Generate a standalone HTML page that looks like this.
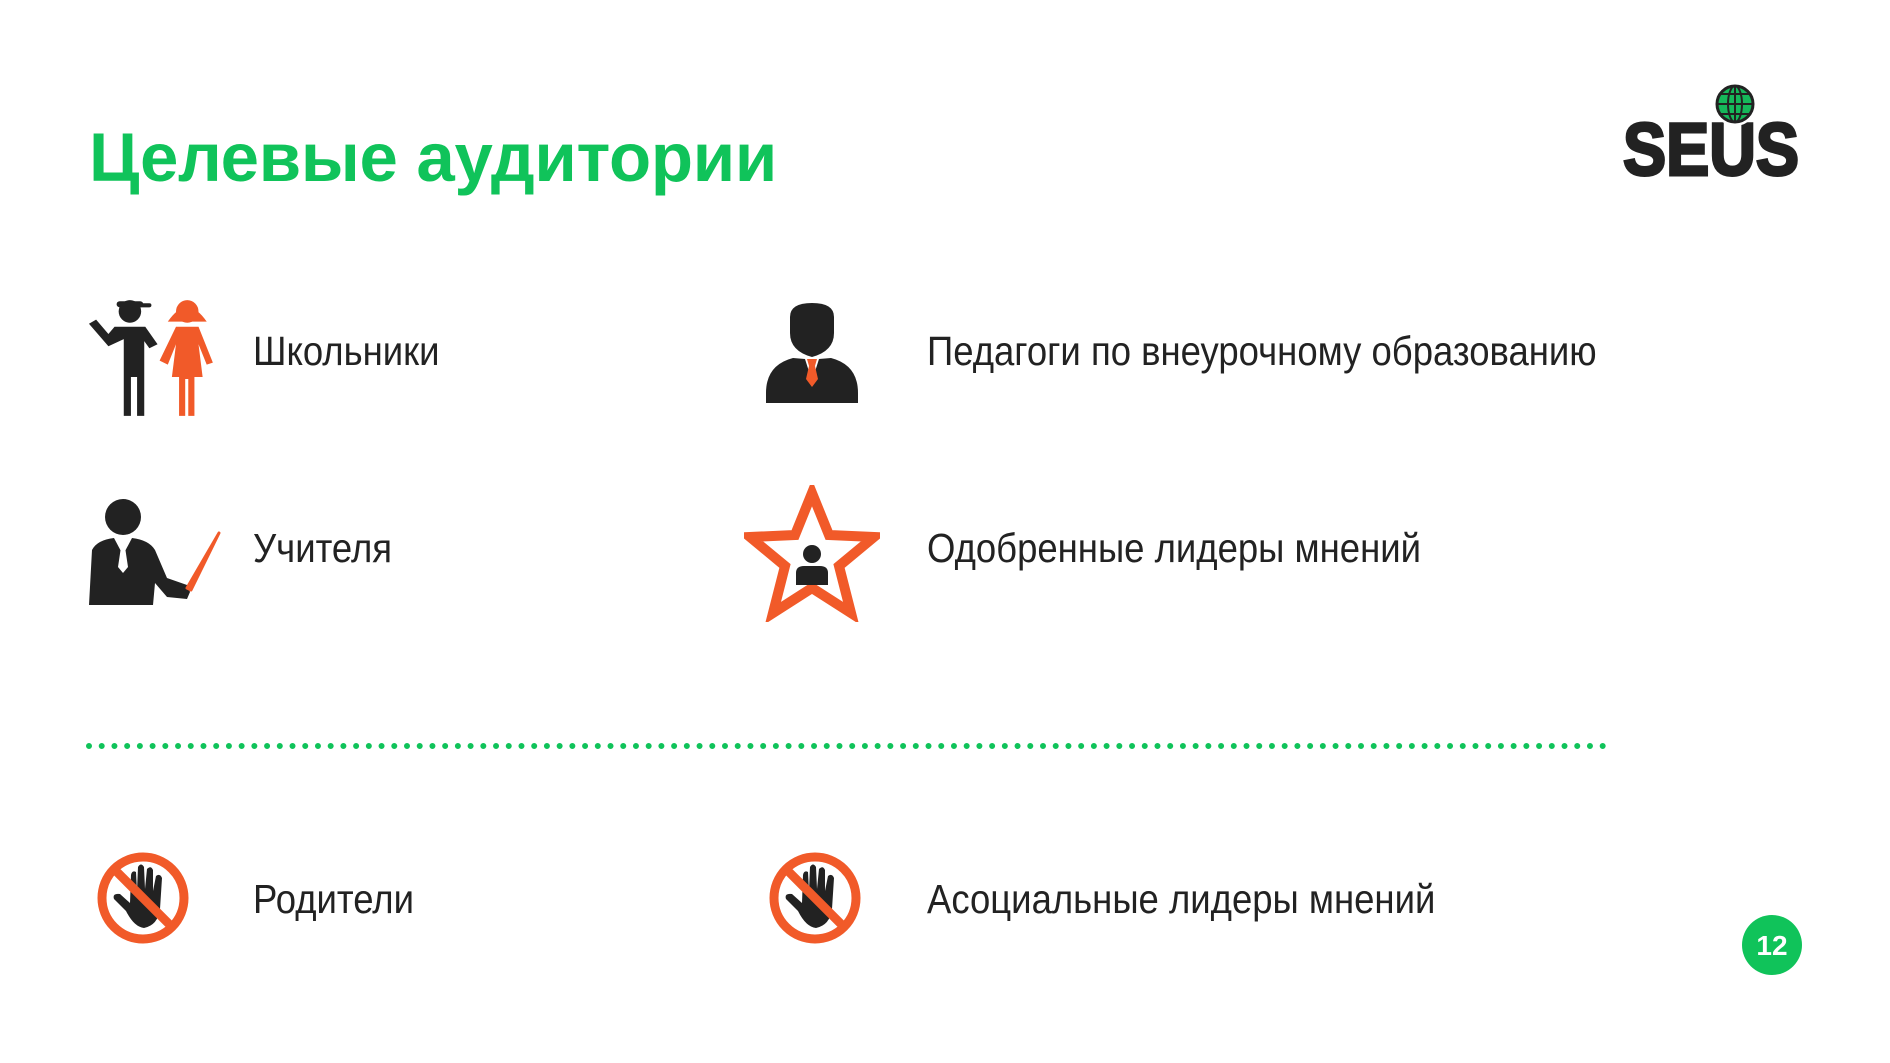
<!DOCTYPE html>
<html><head><meta charset="utf-8"><style>
html,body{margin:0;padding:0;background:#fff;}
body{width:1890px;height:1063px;position:relative;overflow:hidden;font-family:"Liberation Sans","DejaVu Sans",sans-serif;}
.t{position:absolute;color:#222;font-size:41px;line-height:50px;white-space:nowrap;transform:scaleX(.89);transform-origin:left center;}
h1{position:absolute;left:89px;top:118px;margin:0;font-size:69px;line-height:80px;font-weight:bold;color:#10c35a;letter-spacing:-0.3px;white-space:nowrap;}
svg{position:absolute;}
</style></head><body>
<h1>Целевые аудитории</h1>

<svg style="left:1618px;top:80px" width="200" height="105" viewBox="0 0 200 105">
<text x="5" y="95" font-family="Liberation Sans, sans-serif" font-weight="bold" font-size="74" fill="#222" stroke="#222" stroke-width="3" textLength="176" lengthAdjust="spacingAndGlyphs">SEUS</text>
<circle cx="117" cy="24" r="22" fill="#fff"/>
<circle cx="117" cy="24" r="18" fill="#16b85a" stroke="#222" stroke-width="3"/>
<g stroke="#222" stroke-width="2" fill="none"><ellipse cx="117" cy="24" rx="7" ry="18"/><line x1="117" y1="6" x2="117" y2="42"/><line x1="99" y1="24" x2="135" y2="24"/><line x1="102" y1="14" x2="132" y2="14"/><line x1="102" y1="34" x2="132" y2="34"/></g>
</svg>

<svg style="left:85px;top:293px" width="140" height="128" viewBox="0 0 135 125">
<g fill="#222">
<circle cx="43" cy="18" r="11"/><rect x="30" y="8" width="26" height="6" rx="3"/><rect x="44" y="10" width="20" height="4" rx="2"/>
<path d="M28 33 L58 33 L70 50 L62 54 L57 47 L57 120 L50 120 L50 82 L44 82 L44 120 L37 120 L37 45 L22 52 L3 30 L10 26 L22 40 Z"/>
</g>
<g fill="#f15a29">
<circle cx="99" cy="18" r="11"/><path d="M80 28 Q99 0 118 28 Z"/>
<path d="M88 33 L110 33 L124 68 L118 70 L110 50 L114 82 L106 82 L106 120 L100 120 L100 84 L97 84 L97 120 L91 120 L91 82 L84 82 L88 50 L80 70 L72 66 Z"/>
</g>
</svg>

<svg style="left:763px;top:303px" width="98" height="102" viewBox="0 0 98 102">
<path d="M27 14 Q27 0 49 0 Q71 0 71 14 L71 30 Q71 48 49 54 Q27 48 27 30 Z" fill="#222"/>
<path d="M30 55 L42 56 L49 78 L56 56 L68 55 Q95 62 95 90 L95 100 L3 100 L3 90 Q3 62 30 55Z" fill="#222"/>
<path d="M44 56 L54 56 L52 63 L55 76 L49 84 L43 76 L46 63 Z" fill="#f15a29"/>
</svg>

<svg style="left:87px;top:495px" width="135" height="115" viewBox="0 0 135 115">
<circle cx="36" cy="22" r="18" fill="#222"/>
<path d="M5 55 Q10 45 27 43 L36 60 L45 43 Q62 45 68 55 L80 83 L100 90 L103 97 L100 104 L80 102 L68 88 L66 110 L2 110 Z" fill="#222"/>
<path d="M32 46 L40 46 L38 52 L41 72 L36 78 L31 72 L34 52Z" fill="#fff"/>
<path d="M132 38 L104 95 L100 93 Z" fill="#f15a29" stroke="#f15a29" stroke-width="3" stroke-linejoin="round"/>
</svg>

<svg style="left:744px;top:485px" width="136" height="137" viewBox="0 0 136 137">
<path d="M68 8 L85 50 L130 52 L95 81 L107 128 L68 103 L29 128 L41 81 L6 52 L51 50 Z" fill="#fff" stroke="#f15a29" stroke-width="10" stroke-linejoin="miter"/>
<circle cx="68" cy="69" r="9" fill="#222"/>
<path d="M52 100 L52 88 Q52 81 60 81 L76 81 Q84 81 84 88 L84 100 Z" fill="#222"/>
</svg>

<svg style="left:85px;top:741px" width="1535" height="10">
<line x1="4" y1="5" x2="1530" y2="5" stroke="#10c35a" stroke-width="6" stroke-linecap="round" stroke-dasharray="0 12.72"/>
</svg>

<svg style="left:96px;top:851px" width="94" height="94" viewBox="0 0 94 94">
<circle cx="47" cy="47" r="41" fill="#fff" stroke="#f15a29" stroke-width="9"/>
<path d="M30 60 L18 48 Q16 42 24 43 L34 52 L35 24 Q36 19 40 21 L41 40 L42 16 Q45 11 48 16 L49 38 L51 18 Q55 14 57 19 L57 40 L60 25 Q64 22 66 27 L64 58 Q62 74 48 77 Q38 76 30 60Z" fill="#222"/>
<line x1="18" y1="18" x2="76" y2="76" stroke="#f15a29" stroke-width="9"/>
</svg>
<svg style="left:768px;top:851px" width="94" height="94" viewBox="0 0 94 94">
<circle cx="47" cy="47" r="41" fill="#fff" stroke="#f15a29" stroke-width="9"/>
<path d="M30 60 L18 48 Q16 42 24 43 L34 52 L35 24 Q36 19 40 21 L41 40 L42 16 Q45 11 48 16 L49 38 L51 18 Q55 14 57 19 L57 40 L60 25 Q64 22 66 27 L64 58 Q62 74 48 77 Q38 76 30 60Z" fill="#222"/>
<line x1="18" y1="18" x2="76" y2="76" stroke="#f15a29" stroke-width="9"/>
</svg>

<div class="t" style="left:253px;top:326px">Школьники</div>
<div class="t" style="left:927px;top:326px">Педагоги по внеурочному образованию</div>
<div class="t" style="left:253px;top:523px">Учителя</div>
<div class="t" style="left:927px;top:523px">Одобренные лидеры мнений</div>
<div class="t" style="left:253px;top:874px">Родители</div>
<div class="t" style="left:927px;top:874px">Асоциальные лидеры мнений</div>

<svg style="left:1742px;top:915px" width="60" height="60" viewBox="0 0 60 60">
<circle cx="30" cy="30" r="30" fill="#10c35a"/>
<text x="30" y="40" text-anchor="middle" font-family="Liberation Sans, sans-serif" font-weight="bold" font-size="28" fill="#fff">12</text>
</svg>
</body></html>
